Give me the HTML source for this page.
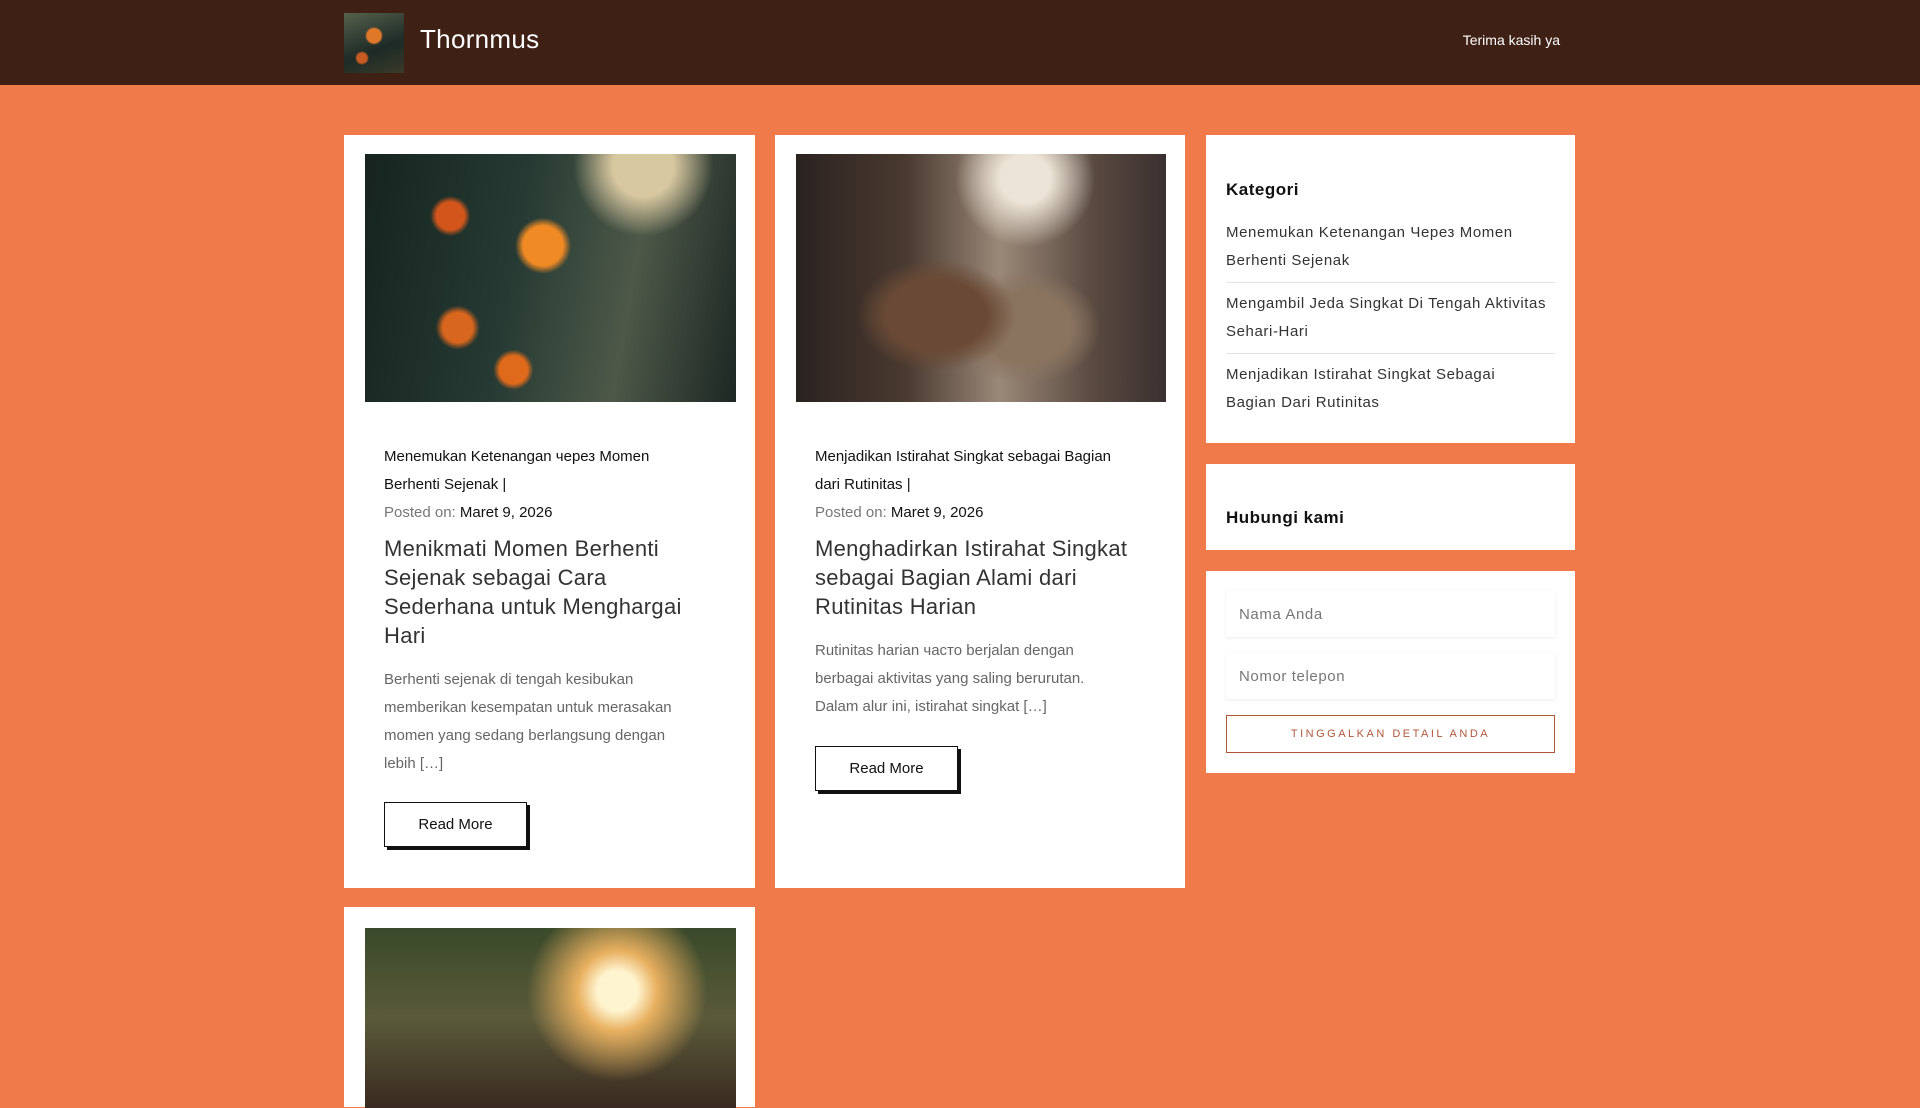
<!DOCTYPE html>
<html><head><meta charset="utf-8"><style>
*{box-sizing:border-box;margin:0;padding:0}
body{width:1920px;height:1080px;overflow:hidden;background:#f07a4a;font-family:"Liberation Sans","Noto Sans CJK SC",sans-serif;position:relative}
.hdr{position:absolute;left:0;top:0;width:1920px;height:85px;background:#3f2015}
.logo{position:absolute;left:344px;top:13px;width:60px;height:60px;background:radial-gradient(circle at 50% 38%,#e0782a 0 7px,transparent 9px),radial-gradient(circle at 30% 75%,#c65a20 0 5px,transparent 7px),linear-gradient(160deg,#55604c,#1d2a26 60%,#3a3a2a)}
.site{position:absolute;left:420px;top:24px;color:#fff;font-size:26px;letter-spacing:.3px}
.nav{position:absolute;right:360px;top:32px;color:#fff;font-size:14px}
.card{position:absolute;background:#fff}
.img{position:absolute;left:21px;top:19px;width:371px;height:248px}
.c{position:absolute;left:40px;width:305px}
.cat{font-size:15px;line-height:28px;color:#111}
.post{font-size:15px;line-height:28px;color:#777}.post b{color:#111;font-weight:normal}
.ttl{font-size:22px;line-height:29px;color:#333;margin-top:7px;letter-spacing:.3px;width:320px}
.ex{font-size:15px;line-height:28px;color:#666}
.btn{position:absolute;left:40px;width:143px;height:45px;border:1px solid #111;background:#fff;box-shadow:3px 3px 0 #111;font-size:15px;text-align:center;line-height:43px;color:#111}
.side{position:absolute;left:1206px;width:369px;background:#fff}
.h{position:absolute;left:20px;font-size:17px;font-weight:bold;color:#111;letter-spacing:.5px}
.li{position:absolute;left:20px;width:320px;font-size:15px;line-height:28px;color:#333;letter-spacing:.6px}
.sep{position:absolute;left:20px;width:329px;height:1px;background:#e4e4e4}
.inp{position:absolute;left:20px;width:329px;height:46px;box-shadow:0 1px 3px rgba(0,0,0,.08);font-size:15px;color:#777;padding-left:13px;line-height:48px;letter-spacing:.6px}
.sb{position:absolute;left:20px;top:144px;width:329px;height:38px;border:1px solid #b0573a;color:#b0573a;font-size:11px;letter-spacing:2.5px;text-align:center;line-height:37px}
</style></head><body>
<div class="hdr"><div class="logo"></div><div class="site">Thornmus</div><div class="nav">Terima kasih ya</div></div>

<div class="card" style="left:344px;top:135px;width:411px;height:753px">
<div class="img" style="background:radial-gradient(circle at 48% 37%,#f08a25 0 20px,transparent 28px),radial-gradient(circle at 23% 25%,#d2561c 0 14px,transparent 20px),radial-gradient(circle at 25% 70%,#d8661e 0 15px,transparent 22px),radial-gradient(circle at 40% 87%,#e06a1c 0 14px,transparent 20px),radial-gradient(circle at 75% 5%,#d8c8a0 0 30px,transparent 70px),linear-gradient(100deg,#16231f 0%,#263a33 40%,#4d5848 70%,#1d2724 100%)"></div>
<div class="c" style="top:308px"><div class="cat">Menemukan Ketenangan через Momen Berhenti Sejenak |</div><div class="post">Posted on: <b>Maret 9, 2026</b></div><div class="ttl">Menikmati Momen Berhenti Sejenak sebagai Cara Sederhana untuk Menghargai Hari</div><div class="ex" style="margin-top:16px">Berhenti sejenak di tengah kesibukan memberikan kesempatan untuk merasakan momen yang sedang berlangsung dengan lebih […]</div></div>
<div class="btn" style="top:667px">Read More</div>
</div>

<div class="card" style="left:775px;top:135px;width:410px;height:753px">
<div class="img" style="width:370px;background:radial-gradient(ellipse at 62% 10%,#ece4d6 0 25px,transparent 70px),radial-gradient(ellipse at 38% 65%,#6a4a36 0 50px,transparent 80px),radial-gradient(ellipse at 62% 70%,#8a7460 0 45px,transparent 75px),linear-gradient(90deg,#2a2220 0%,#4a3a30 30%,#9a8878 55%,#5a4a40 80%,#3a3030 100%)"></div>
<div class="c" style="top:308px;width:300px"><div class="cat">Menjadikan Istirahat Singkat sebagai Bagian dari Rutinitas |</div><div class="post">Posted on: <b>Maret 9, 2026</b></div><div class="ttl">Menghadirkan Istirahat Singkat sebagai Bagian Alami dari Rutinitas Harian</div><div class="ex" style="margin-top:16px;width:290px">Rutinitas harian часто berjalan dengan berbagai aktivitas yang saling berurutan. Dalam alur ini, istirahat singkat […]</div></div>
<div class="btn" style="top:611px">Read More</div>
</div>

<div class="card" style="left:344px;top:907px;width:411px;height:200px">
<div class="img" style="top:21px;height:180px;background:radial-gradient(circle at 68% 35%,#fff4d0 0 20px,#e8b060 40px,transparent 90px),linear-gradient(180deg,#3a4a2a,#5a5a3a 50%,#3a2a20)"></div>
</div>

<div class="side" style="top:135px;height:308px">
<div class="h" style="top:45px">Kategori</div>
<div class="li" style="top:84px">Menemukan Ketenangan Через Momen Berhenti Sejenak</div>
<div class="sep" style="top:147px"></div>
<div class="li" style="top:155px;width:335px">Mengambil Jeda Singkat Di Tengah Aktivitas Sehari-Hari</div>
<div class="sep" style="top:218px"></div>
<div class="li" style="top:226px;width:300px">Menjadikan Istirahat Singkat Sebagai Bagian Dari Rutinitas</div>
</div>
<div class="side" style="top:464px;height:86px"><div class="h" style="top:44px">Hubungi kami</div></div>
<div class="side" style="top:571px;height:202px">
<div class="inp" style="top:20px">Nama Anda</div>
<div class="inp" style="top:82px">Nomor telepon</div>
<div class="sb">TINGGALKAN DETAIL ANDA</div>
</div>
</body></html>
